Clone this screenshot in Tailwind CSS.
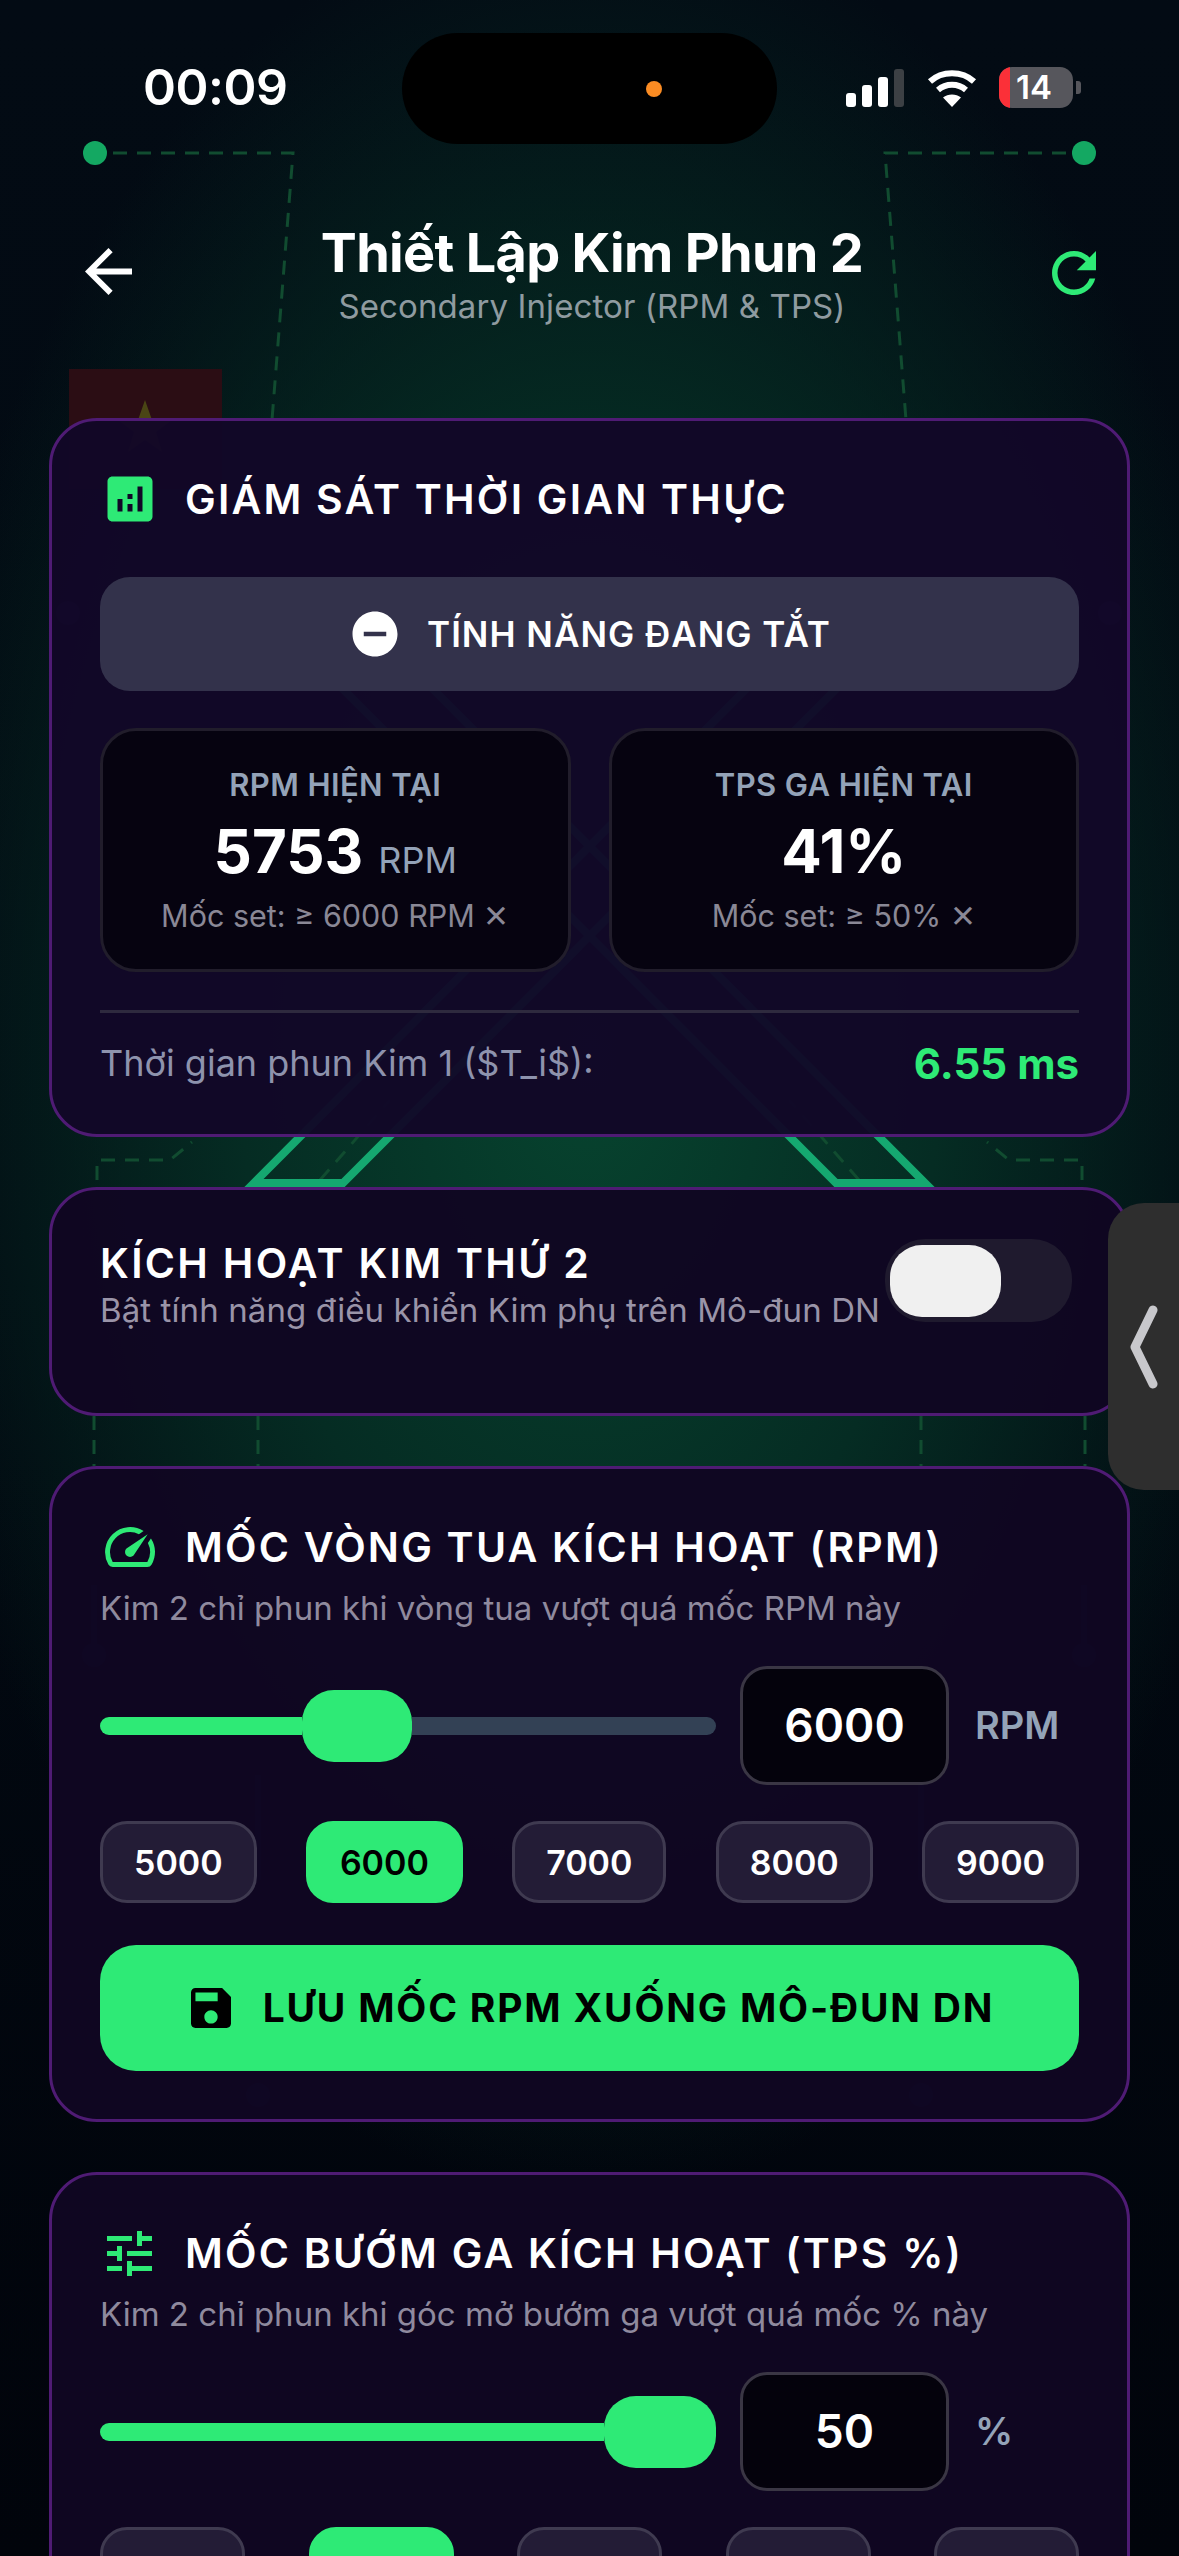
<!DOCTYPE html>
<html lang="vi">
<head>
    <meta charset="UTF-8">
    <title>Thiết Lập Kim Phun 2</title>
    <script src="https://cdn.jsdelivr.net/npm/@tailwindcss/browser@4"></script>
</head>
<body class="bg-black overflow-hidden">
<div class="relative w-[1179px] h-[2556px] overflow-hidden bg-gradient-to-b from-[#030b14] via-[#020a12] to-[#01040b] font-['Inter','Noto_Sans',sans-serif] text-white">
    <!-- glow + mach dien nen -->
    <div class="absolute inset-0 bg-[radial-gradient(ellipse_700px_1150px_at_590px_1050px,#07442f_0%,#052c23_50%,transparent_100%)]"></div>
    <svg class="absolute inset-0" width="1179" height="2556" viewBox="0 0 1179 2556" fill="none">
        <rect x="69" y="369" width="153" height="120" fill="#2b0d14"/>
        <polygon points="145,400 152,420 172,420 156,432 162,452 145,440 128,452 134,432 118,420 138,420" fill="#4a4514"/>
        <circle cx="95" cy="153" r="12" fill="#14a862"/>
        <circle cx="1084" cy="153" r="12" fill="#14a862"/>
        <g stroke="#114c30" stroke-width="3" stroke-dasharray="14 10">
            <path d="M113 153H293L272 420"/>
            <path d="M1066 153H885L906 420"/>
            <path d="M97 1180V1160H170L192 1142"/>
            <path d="M1082 1180V1160H1009L987 1142"/>
            <path d="M94 1416V1466M258 1416V1466M921 1416V1466M1085 1416V1466"/>
            <path d="M320 1180L390 1100M859 1180L789 1100"/>
        </g>
        <g stroke="#15a870" stroke-width="8">
            <polygon points="254,1183 343,1183 880,645 790,645"/>
            <polygon points="925,1183 836,1183 299,645 389,645"/>
        </g>
        <g fill="#1c2a4a">
            <circle cx="68" cy="613" r="12"/>
            <circle cx="1110" cy="613" r="12"/>
            <circle cx="94" cy="1655" r="12"/>
            <circle cx="1084" cy="1655" r="12"/>
            <circle cx="258" cy="2095" r="12"/>
            <circle cx="921" cy="2095" r="12"/>
        </g>
        <g stroke="#1c2a4a" stroke-width="6">
            <path d="M94 1585V1650M1084 1585V1650M258 1775V1880M921 1775V1880"/>
        </g>
    </svg>

    <div class="relative flex flex-col">
        <!-- status bar -->
        <div class="h-[144px] pt-[33px] pl-[143px] flex items-start">
            <div class="w-[259px] h-[111px] flex items-center"><span class="text-[50px] leading-[60px] font-semibold tracking-[-0.5px] -mt-[3px]">00:09</span></div>
            <div class="w-[375px] h-[111px] rounded-[56px] bg-black flex items-center pl-[244px]">
                <div class="w-[16px] h-[16px] rounded-full bg-[#fb8c23]"></div>
            </div>
            <div class="flex items-center h-[41px] mt-[34px] ml-[69px]">
                <div class="flex items-end gap-[6px] h-[38px] w-[58px]">
                    <div class="w-[10px] h-[14px] rounded-[3px] bg-white"></div>
                    <div class="w-[10px] h-[22px] rounded-[3px] bg-white"></div>
                    <div class="w-[10px] h-[30px] rounded-[3px] bg-white"></div>
                    <div class="w-[10px] h-[38px] rounded-[3px] bg-[#3c4044]"></div>
                </div>
                <svg class="ml-[23px]" width="50" height="38" viewBox="0 0 50 38" fill="none">
                    <path d="M3 12.500C15 1.500 35 1.500 47 12.500" stroke="white" stroke-width="6"/>
                    <path d="M11 21C19 14 31 14 39 21" stroke="white" stroke-width="6"/>
                    <path d="M25 38L16 28.500C21 24.500 29 24.500 34 28.500Z" fill="white"/>
                </svg>
                <div class="ml-[22px] w-[74px] h-[41px] rounded-[13px] bg-[#56565c] overflow-hidden flex">
                    <div class="w-[11px] h-full bg-[#fb3038]"></div>
                    <span class="text-[33px] leading-[41px] font-semibold ml-[6px]">14</span>
                </div>
                <div class="ml-[3px] w-[5px] h-[13px] rounded-r-[3px] bg-[#56565c]"></div>
            </div>
        </div>

        <!-- header -->
        <div class="h-[274px] flex items-start justify-between pl-[85px] pr-[83px] pt-[76px]">
            <svg class="mt-[28px]" width="47" height="47" viewBox="4 4 16 16" fill="white"><path d="M20 11H7.830l5.590-5.590L12 4l-8 8 8 8 1.410-1.410L7.830 13H20v-2z"/></svg>
            <div class="flex flex-col items-center">
                <h1 class="text-[54px] leading-[66px] font-bold tracking-[-0.7px]">Thiết Lập Kim Phun 2</h1>
                <p class="text-[33px] leading-[40px] tracking-[0.1px] text-[#8f9ba0]">Secondary Injector (RPM &amp; TPS)</p>
            </div>
            <svg class="mt-[31px]" width="44" height="44" viewBox="4 4 16 16" fill="#2eea76"><path d="M17.650 6.350C16.200 4.900 14.210 4 12 4c-4.420 0-7.990 3.580-7.990 8s3.570 8 7.990 8c3.730 0 6.840-2.550 7.730-6h-2.080c-.82 2.330-3.040 4-5.650 4-3.310 0-6-2.690-6-6s2.690-6 6-6c1.660 0 3.140.69 4.220 1.780L13 11h7V4l-2.350 2.350z"/></svg>
        </div>

        <div class="mx-[49px] flex flex-col gap-[50px]">
            <!-- giam sat -->
            <section class="border-[3px] border-[#4f1b74] rounded-[48px] bg-[#120728]/96 pt-[51px] px-[48px] pb-[46px]">
                <div class="h-[54px] flex items-center">
                    <svg width="60" height="60" viewBox="0 0 24 24" fill="#2eea76"><path d="M19 3H5c-1.100 0-2 .9-2 2v14c0 1.100.9 2 2 2h14c1.100 0 2-.9 2-2V5c0-1.100-.9-2-2-2zM9 17H7v-5h2v5zm4 0h-2v-3h2v3zm0-5h-2v-2h2v2zm4 5h-2V7h2v10z"/></svg>
                    <h2 class="ml-[25px] text-[41px] leading-[54px] font-semibold tracking-[2.2px] whitespace-nowrap">GIÁM SÁT THỜI GIAN THỰC</h2>
                </div>
                <div class="mt-[51px] h-[114px] rounded-[30px] bg-[#33324b] flex items-center justify-center">
                    <svg width="54" height="54" viewBox="0 0 24 24" fill="white"><path d="M12 2C6.480 2 2 6.480 2 12s4.480 10 10 10 10-4.480 10-10S17.520 2 12 2zm5 11H7v-2h10v2z"/></svg>
                    <span class="ml-[25px] text-[35px] leading-[40px] font-semibold tracking-[1px]">TÍNH NĂNG ĐANG TẮT</span>
                </div>
                <div class="mt-[37px] grid grid-cols-2 gap-[38px]">
                    <div class="h-[244px] rounded-[36px] border-[3px] border-[#211d2b] bg-[#06030f]/95 flex flex-col items-center pt-[36px]">
                        <span class="text-[31px] leading-[36px] font-semibold tracking-[0.4px] text-[#94a3b8]">RPM HIỆN TẠI</span>
                        <div class="mt-[13px] h-[70px] flex items-baseline"><span class="text-[60px] leading-[70px] font-bold">5753</span><span class="ml-[15px] text-[36px] text-[#94a3b8]">RPM</span></div>
                        <span class="mt-[10px] text-[30.500px] leading-[40px] text-[#8a8896]">Mốc set: ≥ 6000 RPM ✕</span>
                    </div>
                    <div class="h-[244px] rounded-[36px] border-[3px] border-[#211d2b] bg-[#06030f]/95 flex flex-col items-center pt-[36px]">
                        <span class="text-[31px] leading-[36px] font-semibold tracking-[0.4px] text-[#94a3b8]">TPS GA HIỆN TẠI</span>
                        <div class="mt-[13px] h-[70px] flex items-baseline"><span class="text-[60px] leading-[70px] font-bold">41%</span></div>
                        <span class="mt-[10px] text-[30.500px] leading-[40px] text-[#8a8896]">Mốc set: ≥ 50% ✕</span>
                    </div>
                </div>
                <div class="mt-[38px] h-[3px] bg-[#2e2a3e]"></div>
                <div class="mt-[25px] h-[50px] flex items-center justify-between">
                    <span class="text-[36px] text-[#8e93ad]">Thời gian phun Kim 1 ($T_i$):</span>
                    <span class="text-[42px] font-bold text-[#2eea76]">6.55 ms</span>
                </div>
            </section>

            <!-- kich hoat -->
            <section class="h-[229px] border-[3px] border-[#4f1b74] rounded-[48px] bg-[#100622]/97 pt-[49px] pl-[48px] flex items-start">
                <div class="w-[785px] flex-none">
                    <h2 class="text-[41px] leading-[48px] font-semibold tracking-[2.3px] whitespace-nowrap">KÍCH HOẠT KIM THỨ 2</h2>
                    <p class="mt-[4px] text-[33px] leading-[38px] tracking-[0.1px] text-[#9a94a8] whitespace-nowrap">Bật tính năng điều khiển Kim phụ trên Mô-đun DN</p>
                </div>
                <div class="w-[187px] h-[83px] rounded-[40px] bg-[#1f1a2e] flex items-center pl-[5px]">
                    <div class="w-[111px] h-[72px] rounded-[32px] bg-[#f0f0f0]"></div>
                </div>
            </section>

            <!-- rpm -->
            <section class="border-[3px] border-[#4f1b74] rounded-[48px] bg-[#100622]/97 pt-[51px] px-[48px] pb-[48px]">
                <div class="h-[54px] flex items-center">
                    <svg class="ml-[5px]" width="50" height="50" viewBox="2 2 20 20" fill="#2eea76"><path d="M20.380 8.570l-1.230 1.850a8 8 0 0 1-.22 7.580H5.070A8 8 0 0 1 15.580 6.850l1.850-1.230A10 10 0 0 0 3.350 19a2 2 0 0 0 1.720 1h13.850a2 2 0 0 0 1.740-1 10 10 0 0 0-.27-10.440zm-9.790 6.840a2 2 0 0 0 2.830 0l5.660-8.490-8.490 5.660a2 2 0 0 0 0 2.830z"/></svg>
                    <h2 class="ml-[30px] text-[41px] leading-[54px] font-semibold tracking-[2.2px] whitespace-nowrap">MỐC VÒNG TUA KÍCH HOẠT (RPM)</h2>
                </div>
                <p class="mt-[14px] text-[33px] leading-[40px] text-[#8f8a9e]">Kim 2 chỉ phun khi vòng tua vượt quá mốc RPM này</p>
                <div class="mt-[38px] flex items-center">
                    <div class="w-[616px] flex items-center">
                        <div class="w-[202px] h-[18px] rounded-l-full bg-[#2eea76]"></div>
                        <div class="w-[110px] h-[72px] rounded-[32px] bg-[#2eea76]"></div>
                        <div class="flex-1 h-[18px] rounded-r-full bg-[#334155]"></div>
                    </div>
                    <div class="ml-[24px] w-[209px] h-[119px] rounded-[27px] border-[3px] border-[#3a3644] bg-[#04020c] flex items-center justify-center text-[46px] font-semibold">6000</div>
                    <span class="ml-[26px] text-[38px] font-semibold text-[#94a3b8]">RPM</span>
                </div>
                <div class="mt-[36px] flex justify-between">
                    <button class="h-[82px] px-[31px] rounded-[27px] border-[3px] border-[#3f3a50] bg-[#231c36] text-[34px] font-semibold">5000</button>
                    <button class="h-[82px] px-[31px] rounded-[27px] border-[3px] border-[#2eea76] bg-[#2eea76] text-[34px] font-semibold text-black">6000</button>
                    <button class="h-[82px] px-[31px] rounded-[27px] border-[3px] border-[#3f3a50] bg-[#231c36] text-[34px] font-semibold">7000</button>
                    <button class="h-[82px] px-[31px] rounded-[27px] border-[3px] border-[#3f3a50] bg-[#231c36] text-[34px] font-semibold">8000</button>
                    <button class="h-[82px] px-[31px] rounded-[27px] border-[3px] border-[#3f3a50] bg-[#231c36] text-[34px] font-semibold">9000</button>
                </div>
                <button class="mt-[42px] w-full h-[126px] pl-[6px] rounded-[36px] bg-[#2eea76] flex items-center justify-center text-black">
                    <svg viewBox="3 3 18 18" fill="black" class="w-[40px] h-[40px]"><path d="M17 3H5c-1.110 0-2 .9-2 2v14c0 1.100.89 2 2 2h14c1.100 0 2-.9 2-2V7l-4-4zm-5 16c-1.660 0-3-1.340-3-3s1.340-3 3-3 3 1.340 3 3-1.340 3-3 3zm3-10H5V5h10v4z"/></svg>
                    <span class="ml-[32px] text-[39px] font-bold tracking-[1.8px]">LƯU MỐC RPM XUỐNG MÔ-ĐUN DN</span>
                </button>
            </section>

            <!-- tps -->
            <section class="border-[3px] border-[#4f1b74] rounded-[48px] bg-[#100622]/97 pt-[51px] px-[48px] pb-[48px]">
                <div class="h-[54px] flex items-center">
                    <svg class="ml-[7px]" width="45" height="45" viewBox="3 3 18 18" fill="#2eea76"><path d="M3 17v2h6v-2H3zM3 5v2h10V5H3zm10 16v-2h8v-2h-8v-2h-2v6h2zM7 9v2H3v2h4v2h2V9H7zm14 4v-2H11v2h10zm-6-4h2V7h4V5h-4V3h-2v6z"/></svg>
                    <h2 class="ml-[33px] text-[41px] leading-[54px] font-semibold tracking-[2.2px] whitespace-nowrap">MỐC BƯỚM GA KÍCH HOẠT (TPS %)</h2>
                </div>
                <p class="mt-[14px] text-[33px] leading-[40px] text-[#8f8a9e]">Kim 2 chỉ phun khi góc mở bướm ga vượt quá mốc % này</p>
                <div class="mt-[38px] flex items-center">
                    <div class="w-[616px] flex items-center">
                        <div class="w-[504px] h-[18px] rounded-l-full bg-[#2eea76]"></div>
                        <div class="w-[112px] h-[72px] rounded-[32px] bg-[#2eea76]"></div>
                    </div>
                    <div class="ml-[24px] w-[209px] h-[119px] rounded-[27px] border-[3px] border-[#3a3644] bg-[#04020c] flex items-center justify-center text-[46px] font-semibold">50</div>
                    <span class="ml-[26px] text-[38px] font-semibold text-[#94a3b8]">%</span>
                </div>
                <div class="mt-[36px] flex justify-between">
                    <div class="w-[145px] h-[82px] rounded-[27px] border-[3px] border-[#3f3a50] bg-[#231c36]"></div>
                    <div class="w-[145px] h-[82px] rounded-[27px] border-[3px] border-[#2eea76] bg-[#2eea76]"></div>
                    <div class="w-[145px] h-[82px] rounded-[27px] border-[3px] border-[#3f3a50] bg-[#231c36]"></div>
                    <div class="w-[145px] h-[82px] rounded-[27px] border-[3px] border-[#3f3a50] bg-[#231c36]"></div>
                    <div class="w-[145px] h-[82px] rounded-[27px] border-[3px] border-[#3f3a50] bg-[#231c36]"></div>
                </div>
            </section>
        </div>
    </div>

    <!-- tab noi ben phai -->
    <div class="absolute left-[1108px] top-[1203px] w-[71px] h-[287px] rounded-l-[36px] bg-[#2e2e2e] flex items-center pl-[20px]">
        <svg width="30" height="84" viewBox="0 0 30 84" fill="none"><path d="M25 5L7 42L25 79" stroke="#c8c8cc" stroke-width="9" stroke-linecap="round" stroke-linejoin="round"/></svg>
    </div>
</div>
</body>
</html>
